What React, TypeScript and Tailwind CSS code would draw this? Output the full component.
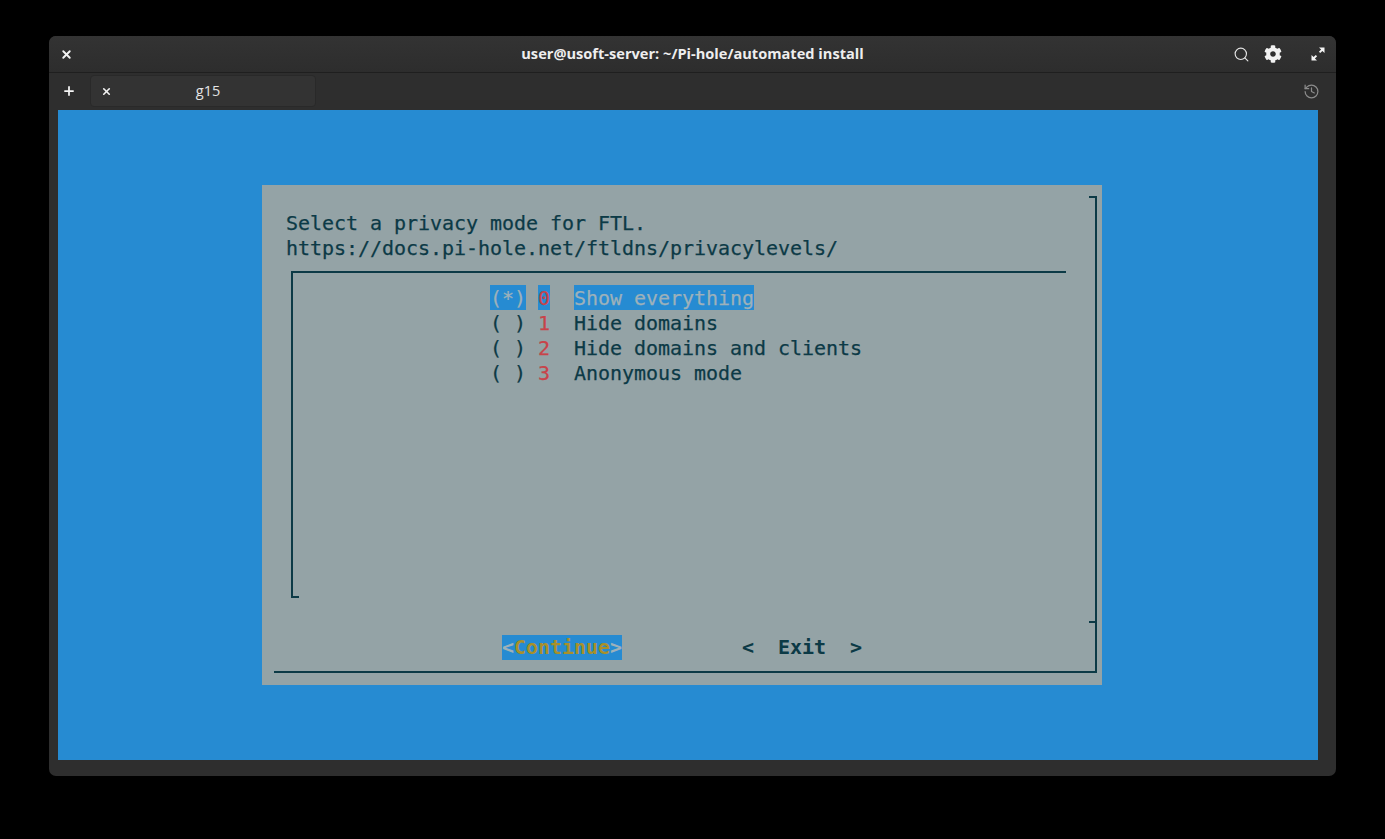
import React from "react";
import { FaCog } from "react-icons/fa";
import { History, Plus, Search, X } from "lucide-react";

const options = [
  { mark: "( )", num: "1", label: "Hide domains" },
  { mark: "( )", num: "2", label: "Hide domains and clients" },
  { mark: "( )", num: "3", label: "Anonymous mode" },
];

function ExpandIcon() {
  return (
    <svg width="14" height="14" viewBox="0 0 14 14" fill="#f4f4f4">
      <path d="M8 0.5h5.5V6L11.4 3.9 9.2 6.1 7.9 4.8 10.1 2.6z" />
      <path d="M6 13.5H0.5V8L2.6 10.1 4.8 7.9 6.1 9.2 3.9 11.4z" />
    </svg>
  );
}

export default function App() {
  return (
    <div className="h-[839px] w-[1385px] overflow-hidden bg-black pl-[49px] pt-[36px]">
      <div className="h-[740px] w-[1287px] rounded-[7px] bg-[#2e2e2e] font-['Open_Sans',sans-serif]">
        {/* title bar */}
        <div className="grid h-[37px] grid-cols-[1fr_auto_1fr] items-center rounded-t-[7px] border-b border-[#1f1f1f] bg-gradient-to-b from-[#333333] to-[#2d2d2d] pl-[11px] pr-[11px]">
          <X size={13} strokeWidth={3.5} className="text-[#f2f2f2]" />
          <span className="text-[14.6px] font-bold text-[#eeeeee]">
            user@usoft-server: ~/Pi-hole/automated install
          </span>
          <div className="flex items-center justify-end">
            <Search size={17} strokeWidth={1.6} className="text-[#e6e6e6]" />
            <FaCog size={18} className="ml-[14px] text-[#f2f2f2]" />
            <div className="ml-[29px]">
              <ExpandIcon />
            </div>
          </div>
        </div>
        {/* tab bar */}
        <div className="flex h-[37px] items-start pl-[13px] pr-[16px] pt-[2px]">
          <Plus size={14} strokeWidth={3} className="mt-[9px] text-[#f6f6f6]" />
          <div className="relative ml-[14px] flex h-[32px] w-[226px] items-center justify-center rounded-[4px] border border-[#292929] bg-[#333333] pl-[10px] text-[14.5px] text-[#e4e4e4]">
            <X size={11} strokeWidth={3.5} className="absolute left-[10px] top-[10px] text-[#f2f2f2]" />
            g15
          </div>
          <History size={17} strokeWidth={1.7} className="ml-auto mt-[8px] text-[#8c8c8c]" />
        </div>
        {/* terminal */}
        <div className="ml-[9px] h-[650px] w-[1260px] overflow-hidden bg-[#268bd2] pl-[204px] pt-[75px]">
          <div className="relative h-[500px] w-[840px] whitespace-pre bg-[#94a3a6] pt-[26px] font-['DejaVu_Sans_Mono',monospace] text-[20px] leading-[25px] tracking-[-0.04px] text-[#0c3a46] [-webkit-text-stroke:0.25px]">
            <div className="absolute left-[12px] top-[11px] h-[477px] w-[823px] border-b-2 border-r-2 border-[#0c3a46]">
              <div className="absolute right-0 top-0 h-[2px] w-[6px] bg-[#0c3a46]" />
              <div className="absolute bottom-[48px] right-0 h-[2px] w-[6px] bg-[#0c3a46]" />
            </div>
            <div className="pl-[24px]">Select a privacy mode for FTL.</div>
            <div className="pl-[24px]">https://docs.pi-hole.net/ftldns/privacylevels/</div>
            <div className="relative ml-[29px] mt-[10px] h-[327px] w-[775px] border-l-2 border-t-2 border-[#0c3a46] pl-[197px] pt-[12px]">
              <div className="absolute bottom-0 left-0 h-[2px] w-[6px] bg-[#0c3a46]" />
              <div className="h-[25px] leading-[27px]">
                <span className="inline-block h-[25px] bg-[#268bd2] text-[#9db1ba]">(*)</span>
                {" "}
                <span className="inline-block h-[25px] bg-[#268bd2] text-[#c8434a]">0</span>
                {"  "}
                <span className="inline-block h-[25px] bg-[#268bd2] text-[#9db1ba]">Show everything</span>
              </div>
              {options.map((o) => (
                <div key={o.num} className="h-[25px] leading-[27px]">
                  {o.mark} <span className="text-[#c8434a]">{o.num}</span>
                  {"  "}
                  {o.label}
                </div>
              ))}
            </div>
            <div className="mt-[37px] flex pl-[240px] font-bold [-webkit-text-stroke:0px]">
              <div className="bg-[#268bd2] text-[#9db1ba]">
                {"<"}
                <span className="text-[#a8902a]">Continue</span>
                {">"}
              </div>
              <div className="ml-[120px]">{"<  Exit  >"}</div>
            </div>
          </div>
        </div>
      </div>
    </div>
  );
}
